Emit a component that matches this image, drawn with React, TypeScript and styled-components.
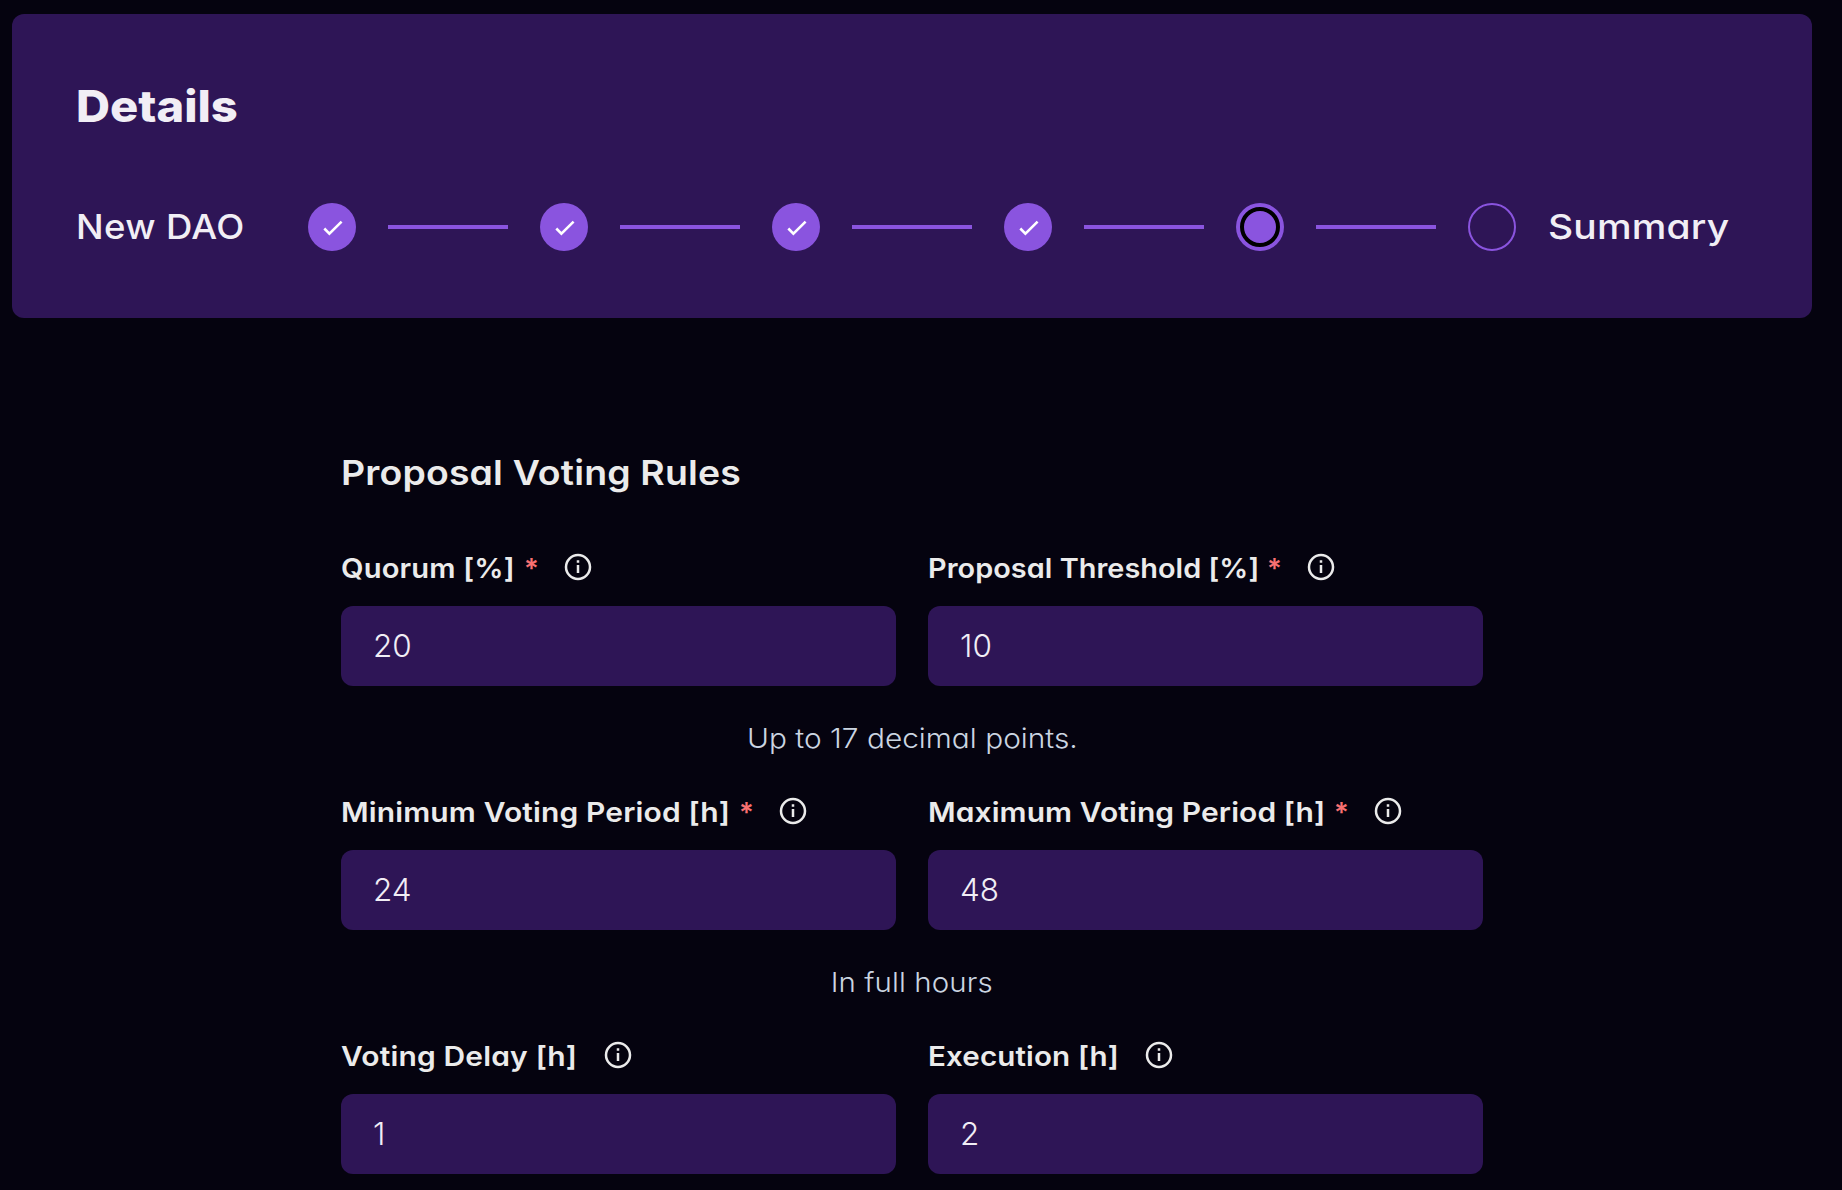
import React from "react";
import styled, { createGlobalStyle, css } from "styled-components";

const color = {
  page: "#05030f",
  panel: "#2e1556",
  accent: "#8a54df",
  panelText: "#f1eef5",
  text: "#ebebeb",
  muted: "#cbd5e1",
  danger: "#f87171",
};

const GlobalStyle = createGlobalStyle`
  *, *::before, *::after { box-sizing: border-box; }
  html, body { margin: 0; background: ${color.page}; }
  body {
    font-family: Inter, "Open Sans", sans-serif;
    font-feature-settings: "cv11";
    color: ${color.text};
    -webkit-font-smoothing: antialiased;
  }
`;

type Fit = { $stretch?: number; $tracking?: number };

const fit = css<Fit>`
  display: inline-block;
  white-space: nowrap;
  letter-spacing: ${(p) => p.$tracking ?? 0}px;
  transform: scaleX(${(p) => p.$stretch ?? 1});
  transform-origin: left center;
`;

const Page = styled.div`
  height: 1190px;
  padding: 14px 30px 0 12px;
  overflow: hidden;
  background: ${color.page};
`;

const Header = styled.header`
  height: 304px;
  padding: 64px;
  border-radius: 12px;
  background: ${color.panel};
  color: ${color.panelText};
`;

const Title = styled.h1<Fit>`
  ${fit}
  display: block;
  width: max-content;
  margin: 0;
  font-size: 44px;
  font-weight: 800;
  font-feature-settings: normal;
  line-height: 56px;
`;

const Stepper = styled.div`
  display: flex;
  align-items: center;
  gap: 32px;
  height: 48px;
  margin-top: 69px;
`;

const StepName = styled.div<{ $width: number }>`
  flex: none;
  width: ${(p) => p.$width}px;
  font-size: 34.5px;
  font-weight: 450;
  line-height: 48px;
`;

const StepText = styled.span<Fit>`
  ${fit}
`;

const Line = styled.div`
  flex: none;
  width: 120px;
  height: 4px;
  background: ${color.accent};
`;

type StepState = "done" | "current" | "todo";

const Dot = styled.div<{ $state: StepState }>`
  flex: none;
  display: grid;
  place-items: center;
  width: 48px;
  height: 48px;
  border-radius: 50%;
  background: ${(p) => (p.$state === "todo" ? "transparent" : color.accent)};
  border: ${(p) => (p.$state === "todo" ? `2px solid ${color.accent}` : "none")};
`;

const Ring = styled.div`
  width: 40px;
  height: 40px;
  border: 4px solid #000;
  border-radius: 50%;
`;

const Form = styled.main`
  width: 1142px;
  margin: 131px auto 0;
`;

const Heading = styled.h2<Fit>`
  ${fit}
  display: block;
  width: max-content;
  margin: 0 0 51px;
  font-size: 34.5px;
  font-weight: 600;
  line-height: 48px;
`;

const FieldRow = styled.div`
  display: grid;
  grid-template-columns: 1fr 1fr;
  column-gap: 32px;
`;

const FieldBox = styled.label`
  display: flex;
  flex-direction: column;
  gap: 18px;
`;

const LabelLine = styled.div`
  display: flex;
  align-items: center;
  height: 40px;
  font-size: 27.5px;
  font-weight: 600;
  line-height: 40px;
`;

const LabelBox = styled.span<{ $width: number }>`
  flex: none;
  width: ${(p) => p.$width}px;
`;

const LabelText = styled.span<Fit>`
  ${fit}
`;

const Required = styled.span`
  flex: none;
  width: 11px;
  margin-left: 11px;
  color: ${color.danger};
`;

const InfoIcon = styled.svg`
  flex: none;
  width: 32px;
  height: 32px;
  margin: -2px 0 0 27px;
`;

const Input = styled.input`
  width: 100%;
  height: 80px;
  padding: 0 32px 2px;
  border: 0;
  border-radius: 12px;
  outline: none;
  background: ${color.panel};
  color: ${color.panelText};
  font: inherit;
  font-feature-settings: "cv11";
  font-size: 31.5px;
  font-weight: 350;
`;

const Hint = styled.p`
  height: 40px;
  margin: 32px 0 34px;
  color: ${color.muted};
  font-size: 27.5px;
  font-weight: 350;
  line-height: 40px;
  text-align: center;
`;

const HintText = styled.span<Fit>`
  ${fit}
  transform-origin: center;
`;

function Step({ state }: { state: StepState }) {
  return (
    <Dot $state={state}>
      {state === "done" && (
        <svg width="48" height="48" viewBox="0 0 48 48" fill="none">
          <path d="M16.3 25.5l5.1 5.1L33.6 18.6" stroke="#fff" strokeWidth="2.6" />
        </svg>
      )}
      {state === "current" && <Ring />}
    </Dot>
  );
}

type FieldProps = {
  label: string;
  value: string;
  width: number;
  stretch: number;
  tracking: number;
  required?: boolean;
};

function Field({ label, value, width, stretch, tracking, required }: FieldProps) {
  return (
    <FieldBox>
      <LabelLine>
        <LabelBox $width={width}>
          <LabelText $stretch={stretch} $tracking={tracking}>{label}</LabelText>
        </LabelBox>
        {required && <Required>*</Required>}
        <InfoIcon viewBox="0 0 32 32" fill="none">
          <circle cx="16" cy="16" r="12" stroke={color.text} strokeWidth="2.5" />
          <path d="M16 9.2v2.5M16 14v8" stroke={color.text} strokeWidth="2.5" />
        </InfoIcon>
      </LabelLine>
      <Input defaultValue={value} />
    </FieldBox>
  );
}

const steps: StepState[] = ["done", "done", "done", "done", "current", "todo"];

export default function App() {
  return (
    <>
      <GlobalStyle />
      <Page>
        <Header>
          <Title $stretch={1.07}>Details</Title>
          <Stepper>
            <StepName $width={200}>
              <StepText $stretch={1.06} $tracking={0.3}>New DAO</StepText>
            </StepName>
            {steps.map((state, i) => (
              <React.Fragment key={i}>
                {i > 0 && <Line />}
                <Step state={state} />
              </React.Fragment>
            ))}
            <StepName $width={180}>
              <StepText $stretch={1.13} $tracking={0.15}>Summary</StepText>
            </StepName>
          </Stepper>
        </Header>
        <Form>
          <Heading $stretch={1.085} $tracking={0.14}>Proposal Voting Rules</Heading>
          <FieldRow>
            <Field label="Quorum [%]" value="20" width={172} stretch={1.06} tracking={0.15} required />
            <Field label="Proposal Threshold [%]" value="10" width={328} stretch={1.05} tracking={0.03} required />
          </FieldRow>
          <Hint>
            <HintText $stretch={1.085}>Up to 17 decimal points.</HintText>
          </Hint>
          <FieldRow>
            <Field label="Minimum Voting Period [h]" value="24" width={387} stretch={1.09} tracking={0.13} required />
            <Field label="Maximum Voting Period [h]" value="48" width={395} stretch={1.09} tracking={0.08} required />
          </FieldRow>
          <Hint>
            <HintText $stretch={1.07} $tracking={0.1}>In full hours</HintText>
          </Hint>
          <FieldRow>
            <Field label="Voting Delay [h]" value="1" width={234} stretch={1.09} tracking={0.15} />
            <Field label="Execution [h]" value="2" width={188} stretch={1.075} tracking={0.12} />
          </FieldRow>
        </Form>
      </Page>
    </>
  );
}
